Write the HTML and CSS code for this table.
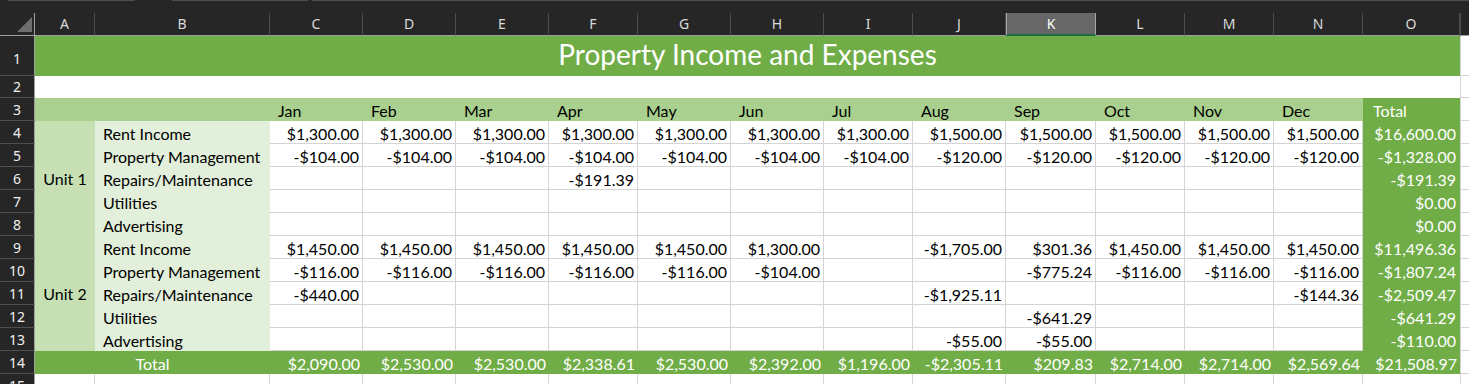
FILE: index.html
```html
<!DOCTYPE html>
<html>
<head>
<meta charset="utf-8">
<link rel="stylesheet" href="styles.css">
</head>
<body>
<div class="topbar"><span class="seg s1"></span><span class="seg s2"></span><span class="seg s3"></span></div>
<div class="sheet">
  <!-- column headers -->
  <div class="ch corner"><svg width="15" height="15" viewBox="0 0 15 15"><polygon points="15,0 15,15 0,15" fill="#6e6e6e"/></svg></div>
  <div class="ch">A</div><div class="ch">B</div><div class="ch">C</div><div class="ch">D</div><div class="ch">E</div>
  <div class="ch">F</div><div class="ch">G</div><div class="ch">H</div><div class="ch">I</div><div class="ch">J</div>
  <div class="ch sel">K</div><div class="ch">L</div><div class="ch">M</div><div class="ch">N</div><div class="ch">O</div>
  <div class="ch chfill"></div>

  <!-- row 1 -->
  <div class="rh rh1">1</div>
  <div class="title">Property Income and Expenses</div>
  <div class="fl"></div>

  <!-- row 2 -->
  <div class="rh">2</div>
  <div class="blank"></div>
  <div class="fl"></div>

  <!-- row 3 -->
  <div class="rh">3</div>
  <div class="mon"></div><div class="mon"></div>
  <div class="mon">Jan</div><div class="mon">Feb</div><div class="mon">Mar</div><div class="mon">Apr</div>
  <div class="mon">May</div><div class="mon">Jun</div><div class="mon">Jul</div><div class="mon">Aug</div>
  <div class="mon">Sep</div><div class="mon">Oct</div><div class="mon">Nov</div><div class="mon">Dec</div>
  <div class="mon monTotal">Total</div>
  <div class="fl"></div>

  <!-- row 4 -->
  <div class="rh">4</div>
  <div class="unit">Unit 1</div>
  <div class="lab">Rent Income</div>
  <div class="c">$1,300.00</div><div class="c">$1,300.00</div><div class="c">$1,300.00</div><div class="c">$1,300.00</div>
  <div class="c">$1,300.00</div><div class="c">$1,300.00</div><div class="c">$1,300.00</div><div class="c">$1,500.00</div>
  <div class="c">$1,500.00</div><div class="c">$1,500.00</div><div class="c">$1,500.00</div><div class="c">$1,500.00</div>
  <div class="tot">$16,600.00</div>
  <div class="fl"></div>

  <!-- row 5 -->
  <div class="rh">5</div>
  <div class="lab">Property Management</div>
  <div class="c">-$104.00</div><div class="c">-$104.00</div><div class="c">-$104.00</div><div class="c">-$104.00</div>
  <div class="c">-$104.00</div><div class="c">-$104.00</div><div class="c">-$104.00</div><div class="c">-$120.00</div>
  <div class="c">-$120.00</div><div class="c">-$120.00</div><div class="c">-$120.00</div><div class="c">-$120.00</div>
  <div class="tot">-$1,328.00</div>
  <div class="fl"></div>

  <!-- row 6 -->
  <div class="rh">6</div>
  <div class="lab">Repairs/Maintenance</div>
  <div class="c"></div><div class="c"></div><div class="c"></div><div class="c">-$191.39</div>
  <div class="c"></div><div class="c"></div><div class="c"></div><div class="c"></div>
  <div class="c"></div><div class="c"></div><div class="c"></div><div class="c"></div>
  <div class="tot">-$191.39</div>
  <div class="fl"></div>

  <!-- row 7 -->
  <div class="rh">7</div>
  <div class="lab">Utilities</div>
  <div class="c"></div><div class="c"></div><div class="c"></div><div class="c"></div>
  <div class="c"></div><div class="c"></div><div class="c"></div><div class="c"></div>
  <div class="c"></div><div class="c"></div><div class="c"></div><div class="c"></div>
  <div class="tot">$0.00</div>
  <div class="fl"></div>

  <!-- row 8 -->
  <div class="rh">8</div>
  <div class="lab">Advertising</div>
  <div class="c"></div><div class="c"></div><div class="c"></div><div class="c"></div>
  <div class="c"></div><div class="c"></div><div class="c"></div><div class="c"></div>
  <div class="c"></div><div class="c"></div><div class="c"></div><div class="c"></div>
  <div class="tot">$0.00</div>
  <div class="fl"></div>

  <!-- row 9 -->
  <div class="rh">9</div>
  <div class="unit">Unit 2</div>
  <div class="lab">Rent Income</div>
  <div class="c">$1,450.00</div><div class="c">$1,450.00</div><div class="c">$1,450.00</div><div class="c">$1,450.00</div>
  <div class="c">$1,450.00</div><div class="c">$1,300.00</div><div class="c"></div><div class="c">-$1,705.00</div>
  <div class="c">$301.36</div><div class="c">$1,450.00</div><div class="c">$1,450.00</div><div class="c">$1,450.00</div>
  <div class="tot">$11,496.36</div>
  <div class="fl"></div>

  <!-- row 10 -->
  <div class="rh">10</div>
  <div class="lab">Property Management</div>
  <div class="c">-$116.00</div><div class="c">-$116.00</div><div class="c">-$116.00</div><div class="c">-$116.00</div>
  <div class="c">-$116.00</div><div class="c">-$104.00</div><div class="c"></div><div class="c"></div>
  <div class="c">-$775.24</div><div class="c">-$116.00</div><div class="c">-$116.00</div><div class="c">-$116.00</div>
  <div class="tot">-$1,807.24</div>
  <div class="fl"></div>

  <!-- row 11 -->
  <div class="rh">11</div>
  <div class="lab">Repairs/Maintenance</div>
  <div class="c">-$440.00</div><div class="c"></div><div class="c"></div><div class="c"></div>
  <div class="c"></div><div class="c"></div><div class="c"></div><div class="c">-$1,925.11</div>
  <div class="c"></div><div class="c"></div><div class="c"></div><div class="c">-$144.36</div>
  <div class="tot">-$2,509.47</div>
  <div class="fl"></div>

  <!-- row 12 -->
  <div class="rh">12</div>
  <div class="lab">Utilities</div>
  <div class="c"></div><div class="c"></div><div class="c"></div><div class="c"></div>
  <div class="c"></div><div class="c"></div><div class="c"></div><div class="c"></div>
  <div class="c">-$641.29</div><div class="c"></div><div class="c"></div><div class="c"></div>
  <div class="tot">-$641.29</div>
  <div class="fl"></div>

  <!-- row 13 -->
  <div class="rh">13</div>
  <div class="lab">Advertising</div>
  <div class="c"></div><div class="c"></div><div class="c"></div><div class="c"></div>
  <div class="c"></div><div class="c"></div><div class="c"></div><div class="c">-$55.00</div>
  <div class="c">-$55.00</div><div class="c"></div><div class="c"></div><div class="c"></div>
  <div class="tot">-$110.00</div>
  <div class="fl"></div>

  <!-- row 14 -->
  <div class="rh">14</div>
  <div class="trl">Total</div>
  <div class="tr">$2,090.00</div><div class="tr">$2,530.00</div><div class="tr">$2,530.00</div><div class="tr">$2,338.61</div>
  <div class="tr">$2,530.00</div><div class="tr">$2,392.00</div><div class="tr">$1,196.00</div><div class="tr">-$2,305.11</div>
  <div class="tr">$209.83</div><div class="tr">$2,714.00</div><div class="tr">$2,714.00</div><div class="tr">$2,569.64</div>
  <div class="tr">$21,508.97</div>
  <div class="fl"></div>

  <!-- row 15 -->
  <div class="rh">15</div>
  <div class="c"></div><div class="c"></div><div class="c"></div><div class="c"></div><div class="c"></div>
  <div class="c"></div><div class="c"></div><div class="c"></div><div class="c"></div><div class="c"></div>
  <div class="c"></div><div class="c"></div><div class="c"></div><div class="c"></div><div class="c nr"></div>
  <div class="fl"></div>
</div>
</body>
</html>
```

FILE: styles.css
```css
* { box-sizing: border-box; }

html, body {
  margin: 0;
  padding: 0;
  background: #ffffff;
  overflow: hidden;
}

body {
  font-family: Lato, "Open Sans", sans-serif;
  font-size: 16px;
  color: #000;
}

.topbar {
  height: 13px;
  background: #262626;
  display: flex;
  align-items: flex-start;
}

.seg {
  height: 1px;
  background: #4e4e4e;
}
.s1 { margin-left: 8px; width: 127px; }
.s2 { margin-left: 37px; width: 136px; }
.s3 { margin-left: 4px; flex: 1; }

.sheet {
  display: grid;
  grid-template-columns: 35px 60px 175px 93px 93px 93px 89px 93px 93px 89px 93px 90px 89px 89px 89px 97px 1fr;
  grid-template-rows: 23px 40px 22px repeat(13, 23px);
}

.sheet > div {
  display: flex;
  align-items: flex-end;
  line-height: 19px;
  white-space: nowrap;
  overflow: hidden;
  border-bottom: 1px solid transparent;
}

/* column headers */
.sheet > .ch {
  background: #262626;
  color: #dadada;
  font-family: "Noto Sans", "Open Sans", sans-serif;
  font-size: 14px;
  justify-content: center;
  align-items: center;
  border-right: 1px solid #4c4c4c;
  border-bottom: 1px solid #a0a0a0;
  padding-bottom: 1px;
}

.sheet > .corner {
  justify-content: flex-end;
  align-items: flex-end;
  padding: 0 2px 3px 0;
  border-right: 1px solid #a0a0a0;
}
.corner svg { display: block; }

.sheet > .sel {
  background: #676767;
  color: #ffffff;
  border-left: 1px solid #a6a6a6;
  border-right: 1px solid #a6a6a6;
  border-bottom: 2px solid #1e6e42;
}

.sheet > .chfill {
  border-right: none;
  border-left: 1px solid #4c4c4c;
}

/* row headers */
.sheet > .rh {
  background: #262626;
  color: #f0f0f0;
  font-family: "Noto Sans", "Open Sans", sans-serif;
  font-size: 14px;
  justify-content: center;
  border-right: 1px solid #a0a0a0;
  border-bottom: 1px solid #505050;
  padding-bottom: 1px;
}
.sheet > .rh1 { padding-bottom: 7px; }

/* title row */
.sheet > .title {
  grid-column: span 15;
  background: #70ad47;
  color: #ffffff;
  font-size: 28px;
  line-height: 34px;
  justify-content: center;
  align-items: center;
  padding-bottom: 4px;
}

.sheet > .blank {
  grid-column: span 15;
  background: #ffffff;
}

.sheet > .fl {
  background: #ffffff;
  border-left: 1px solid #d4d4d4;
  border-bottom: 1px solid #d4d4d4;
}

/* month row */
.sheet > .mon {
  background: #a9d08e;
  padding-left: 8px;
}
.sheet > .monTotal {
  background: #70ad47;
  color: #ffffff;
  padding-left: 10px;
}

/* unit merged cells */
.sheet > .unit {
  grid-row: span 5;
  background: #c6e0b4;
  justify-content: center;
  align-items: center;
  padding-top: 1px;
}

.sheet > .lab {
  background: #e2efda;
  padding-left: 8px;
}

/* data cells */
.sheet > .c {
  background: #ffffff;
  justify-content: flex-end;
  padding-right: 3px;
  border-right: 1px solid #d4d4d4;
  border-bottom: 1px solid #d4d4d4;
}
.sheet > .nr { border-right: none; }

.sheet > .tot {
  background: #70ad47;
  color: #ffffff;
  justify-content: flex-end;
  padding-right: 4px;
}

/* totals row */
.sheet > .trl {
  grid-column: span 2;
  background: #70ad47;
  color: #ffffff;
  justify-content: center;
}
.sheet > .tr {
  background: #70ad47;
  color: #ffffff;
  justify-content: flex-end;
  padding-right: 3px;
}
```
